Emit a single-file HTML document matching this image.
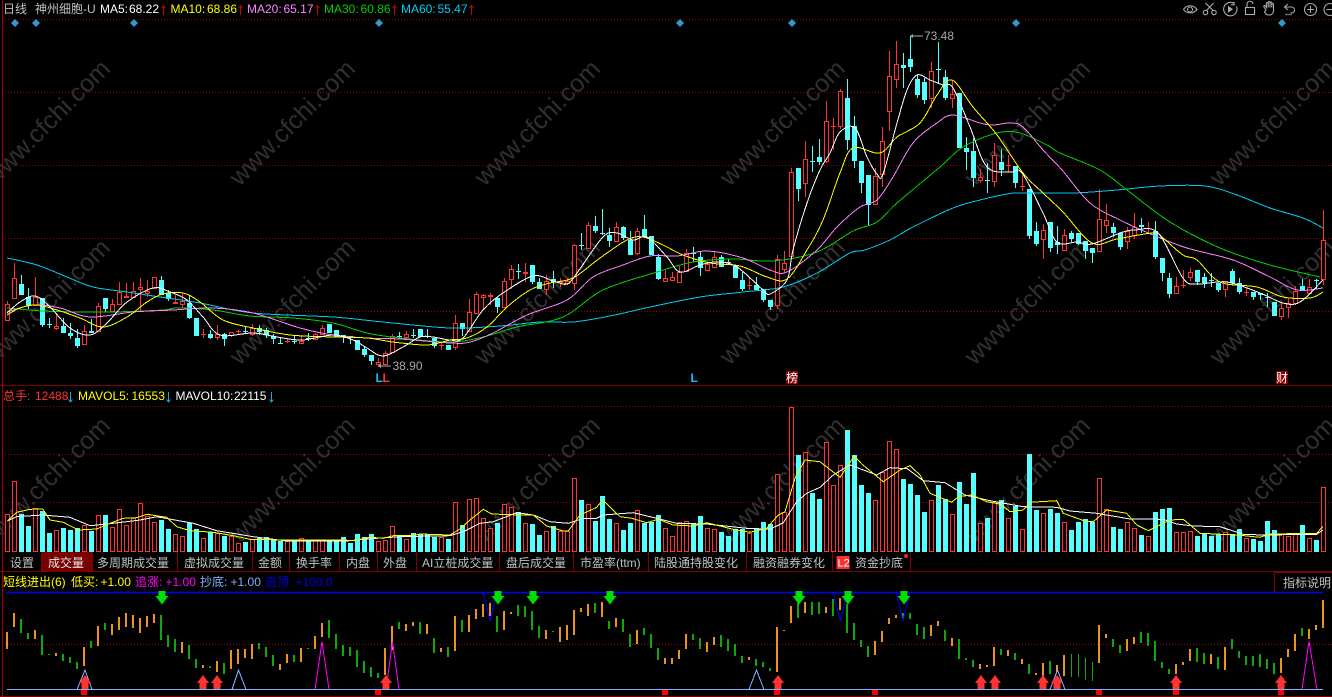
<!DOCTYPE html>
<html lang="zh">
<head>
<meta charset="utf-8">
<title>神州细胞-U 日线</title>
<style>
html,body{margin:0;padding:0;background:#000;width:1332px;height:697px;overflow:hidden}
svg{display:block;position:absolute;left:0;top:0}
text{font-family:"Liberation Sans","Noto Sans CJK SC",sans-serif;font-size:12px;white-space:pre}
.wm text{font-size:25px;fill:#303030}
.tab{fill:#c0c0c0}
</style>
</head>
<body>
<svg id="c" width="1332" height="697" viewBox="0 0 1332 697" xmlns="http://www.w3.org/2000/svg">
<g class="wm">
<text transform="translate(51,118) rotate(-45)" text-anchor="middle" x="-6" y="9">www.cfchi.com</text>
<text transform="translate(296,118) rotate(-45)" text-anchor="middle" x="-6" y="9">www.cfchi.com</text>
<text transform="translate(541,118) rotate(-45)" text-anchor="middle" x="-6" y="9">www.cfchi.com</text>
<text transform="translate(786,118) rotate(-45)" text-anchor="middle" x="-6" y="9">www.cfchi.com</text>
<text transform="translate(1031,118) rotate(-45)" text-anchor="middle" x="-6" y="9">www.cfchi.com</text>
<text transform="translate(1276,118) rotate(-45)" text-anchor="middle" x="-6" y="9">www.cfchi.com</text>
<text transform="translate(51,297) rotate(-45)" text-anchor="middle" x="-6" y="9">www.cfchi.com</text>
<text transform="translate(296,297) rotate(-45)" text-anchor="middle" x="-6" y="9">www.cfchi.com</text>
<text transform="translate(541,297) rotate(-45)" text-anchor="middle" x="-6" y="9">www.cfchi.com</text>
<text transform="translate(786,297) rotate(-45)" text-anchor="middle" x="-6" y="9">www.cfchi.com</text>
<text transform="translate(1031,297) rotate(-45)" text-anchor="middle" x="-6" y="9">www.cfchi.com</text>
<text transform="translate(1276,297) rotate(-45)" text-anchor="middle" x="-6" y="9">www.cfchi.com</text>
<text transform="translate(51,475) rotate(-45)" text-anchor="middle" x="-6" y="9">www.cfchi.com</text>
<text transform="translate(296,475) rotate(-45)" text-anchor="middle" x="-6" y="9">www.cfchi.com</text>
<text transform="translate(541,475) rotate(-45)" text-anchor="middle" x="-6" y="9">www.cfchi.com</text>
<text transform="translate(786,475) rotate(-45)" text-anchor="middle" x="-6" y="9">www.cfchi.com</text>
<text transform="translate(1031,475) rotate(-45)" text-anchor="middle" x="-6" y="9">www.cfchi.com</text>
<text transform="translate(1276,475) rotate(-45)" text-anchor="middle" x="-6" y="9">www.cfchi.com</text>
</g>

<!-- grid -->
<g stroke="#990000" stroke-width="1" stroke-dasharray="1 2" shape-rendering="crispEdges">
<path d="M5 19.5H1332M5 92.5H1332M5 165.5H1332M5 238.5H1332M5 311.5H1332M5 406.5H1332M5 454.5H1332M5 502.5H1332M5 644.5H1332"/>
</g>

<g id="candles"></g>
<g id="ma" fill="none" stroke-width="1" shape-rendering="crispEdges"></g>

<!-- diamonds -->
<g fill="#3399cc">
<path d="M15 19l4 4-4 4-4-4zM36 19l4 4-4 4-4-4zM134 19l4 4-4 4-4-4zM379 19l4 4-4 4-4-4zM680 19l4 4-4 4-4-4zM792 19l4 4-4 4-4-4zM1016 19l4 4-4 4-4-4zM1282 19l4 4-4 4-4-4z"/>
</g>

<!-- panel frame -->
<g stroke="#800000" stroke-width="1" shape-rendering="crispEdges" fill="none">
<path d="M0 385.5H1332M0 571.5H1332M0 696.5H1332"/>
<path d="M2.5 0V697" stroke="#a80000" stroke-width="1"/>
</g>

<!-- price labels -->
<g fill="#a8a8a8">
<text x="924" y="40">73.48</text>
<text x="392.5" y="370">38.90</text>
<path d="M923 35.5H913V34l-3 2 3 2v-1.500H923zM391 365.500H381V364l-3 2 3 2v-1.500H391z"/>
</g>
<g font-weight="bold">
<text x="375.500" y="382" fill="#00c8ff" font-weight="bold">L</text>
<text x="382.500" y="382" fill="#ff3333" font-weight="bold">L</text>
<text x="690.500" y="382" fill="#00c8ff" font-weight="bold">L</text>
</g>
<rect x="786" y="371" width="12" height="13" fill="#800000"/>
<text x="786" y="382" fill="#fff">榜</text>
<rect x="1276" y="371" width="12" height="13" fill="#800000"/>
<text x="1276" y="382" fill="#fff">财</text>

<!-- header -->
<text x="3" y="13" fill="#c0c0c0">日线</text>
<text x="35" y="13" fill="#c0c0c0">神州细胞-U</text>
<text x="100" y="13" fill="#fff">MA5:</text><text x="129" y="13" fill="#fff">68.22</text>
<text x="170.500" y="13" fill="#ffff00">MA10:</text><text x="207" y="13" fill="#ffff00">68.86</text>
<text x="247" y="13" fill="#ff80ff">MA20:</text><text x="283.500" y="13" fill="#ff80ff">65.17</text>
<text x="324" y="13" fill="#00d000">MA30:</text><text x="360.500" y="13" fill="#00d000">60.86</text>
<text x="401" y="13" fill="#00d0f0">MA60:</text><text x="437.500" y="13" fill="#00d0f0">55.47</text>
<path d="M163.500 15V5.500M161.500 8L163.500 5.500L165.500 8M240.500 15V5.500M238.500 8L240.500 5.500L242.500 8M317.500 15V5.500M315.500 8L317.500 5.500L319.500 8M394.500 15V5.500M392.500 8L394.500 5.500L396.500 8M471.500 15V5.500M469.500 8L471.500 5.500L473.500 8" fill="none" stroke="#d00000" stroke-width="1"/>

<!-- toolbar icons -->
<g fill="none" stroke="#aaaaaa" stroke-width="1.100">
<path d="M1183.500 9.500c3-5 10-5 13.500 0c-3.500 4.500-10.500 4.500-13.500 0z"/><circle cx="1190" cy="9.500" r="2.500"/>
<circle cx="1205.500" cy="12.500" r="2.200"/><circle cx="1214" cy="12.500" r="2.200"/><path d="M1206.500 10.500L1213.500 3M1213 10.500L1205.500 3"/>
<path d="M1234 3.500a6.700 6.700 0 1 0 2.500 3M1234 1.800v3h-3"/><path d="M1228 5.800l5 3.500-5 3.500z" fill="#aaaaaa" stroke="none"/>
<rect x="1245.500" y="7.500" width="9" height="7"/><path d="M1247 7V4.500a3 3 0 0 1 6-0.500"/>
<path d="M1266 10l-2-3c-.8-1.200.6-2 1.400-1l1.100 1.500V3.500c0-1.300 1.700-1.300 1.700 0V7.500V2.500c0-1.300 1.800-1.300 1.800 0V7.500V3c0-1.300 1.800-1.300 1.800 0V7.500V4.500c0-1.200 1.700-1.200 1.700 0V10.500c0 3-1.800 4.500-4.200 4.500h-1c-2 0-2.500-1.200-3.800-3z"/>
<path d="M1288 4l-3.500 3 3.500 3M1285 7h6.500a3 3 0 0 1 0 6h-1"/><path d="M1285 14.500h7" stroke="#666" stroke-width="1.500"/>
<circle cx="1310.500" cy="9.500" r="6"/><path d="M1310.500 6v7M1307 9.500h7"/>
<circle cx="1330" cy="9.500" r="6"/><path d="M1326.500 9.500h7"/>
</g>

<!-- volume labels -->
<text x="3" y="400" fill="#ff3333">总手:</text><text x="35" y="400" fill="#ff3333">12488</text>
<text x="78" y="400" fill="#ffff00">MAVOL5:</text><text x="131.500" y="400" fill="#ffff00">16553</text>
<text x="175.500" y="400" fill="#fff">MAVOL10:</text><text x="234" y="400" fill="#fff">22115</text>
<path d="M70.500 392V402M68.500 399.500L70.500 402L72.500 399.500M168.500 392V402M166.500 399.500L168.500 402L170.500 399.500M271.500 392V402M269.500 399.500L271.500 402L273.500 399.500" fill="none" stroke="#20a8c8" stroke-width="1"/>

<g id="vol"></g>
<g id="volma" fill="none" stroke-width="1" shape-rendering="crispEdges"></g>

<!-- tabs -->
<rect x="42" y="552" width="50" height="19" fill="#7a0000"/>
<path d="M41.500 552V571M92.500 552V571M177.500 552V571M252.500 552V571M289.500 552V571M339.500 552V571M377.500 552V571M416.500 552V571M499.500 552V571M573.500 552V571M648.500 552V571M746.500 552V571M832.500 552V571M910.500 552V571" stroke="#800000" shape-rendering="crispEdges"/>
<text class="tab" x="10" y="567">设置</text>
<text x="48" y="567" fill="#e8e8e8">成交量</text>
<text class="tab" x="97" y="567">多周期成交量</text>
<text class="tab" x="184" y="567">虚拟成交量</text>
<text class="tab" x="258" y="567">金额</text>
<text class="tab" x="296" y="567">换手率</text>
<text class="tab" x="346" y="567">内盘</text>
<text class="tab" x="383" y="567">外盘</text>
<text class="tab" x="422" y="567">AI立桩成交量</text>
<text class="tab" x="506" y="567">盘后成交量</text>
<text class="tab" x="580" y="567">市盈率(ttm)</text>
<text class="tab" x="654" y="567">陆股通持股变化</text>
<text class="tab" x="753" y="567">融资融券变化</text>
<rect x="836.500" y="556" width="13" height="13" fill="#ff3030"/>
<text x="837.500" y="566.500" fill="#fff" style="font-size:11px">L2</text>
<text class="tab" x="855" y="567">资金抄底</text>
<circle cx="906" cy="556" r="2" fill="#ff2020"/>

<!-- indicator labels -->
<text x="3" y="586" fill="#ffff00">短线进出(6)</text>
<text x="71" y="586" fill="#ffff00">低买:</text><text x="100.500" y="586" fill="#ffff00">+1.00</text>
<text x="135" y="586" fill="#ff00ff">追涨:</text><text x="165.500" y="586" fill="#ff00ff">+1.00</text>
<text x="200" y="586" fill="#80b0ff">抄底:</text><text x="230.500" y="586" fill="#80b0ff">+1.00</text>
<text x="265" y="586" fill="#0000e0">逃顶:</text><text x="295.500" y="586" fill="#0000e0">+100.0</text>
<path d="M1274.500 592V572.500H1332" fill="none" stroke="#800000" shape-rendering="crispEdges"/>
<text class="tab" x="1283" y="587">指标说明</text>

<g id="ind"></g>
<!-- blue top line & dips -->
<path d="M6 592.500H1323" fill="none" stroke="#0000ff" stroke-width="1.500"/>
<path d="M483 592L490 621L497 592M833 592L840.500 621L847 592M896 592L903 621L910 592" fill="none" stroke="#0000ff" stroke-width="1" shape-rendering="crispEdges"/>
<!-- bottom line + triangles -->
<path d="M7 689.500H1323" stroke="#80b0ff" stroke-width="1" shape-rendering="crispEdges"/>
<path d="M77 689.500L85 670L92 689.500M232 689.500L238.500 670L246 689.500M749 689.500L756.500 670L764 689.500M1050 689.500L1057.500 670L1065 689.500" fill="none" stroke="#80b0ff" stroke-width="1" shape-rendering="crispEdges"/>
<path d="M315 689.500L322 641.500L329 689.500M386 689.500L392.500 641.500L399 689.500M1302 689.500L1309 641.500L1317 689.500" fill="none" stroke="#ff00ff" stroke-width="1" shape-rendering="crispEdges"/>
<g id="arrows"></g>
</svg>
<script>
var NS='http://www.w3.org/2000/svg';
function mk(parent,tag,a){var e=document.createElementNS(NS,tag);for(var k in a)e.setAttribute(k,a[k]);document.getElementById(parent).appendChild(e);return e;}
var X=function(i){return 7+7*i;};
var C="301 304 320 320 1,263 278 298 298 1,275 284 295 295 0,288 297 306 309 0,277 297 305 305 1,298 298 325 327 0,318 324 324 328 0,313 326 328 330 1,318 326 333 333 0,323 333 336 339 0,329 338 346 348 0,325 331 344 344 1,319 331 333 333 0,303 306 331 331 1,298 298 309 312 0,299 304 311 311 1,282 292 304 304 1,283 296 297 298 1,282 291 297 297 1,278 287 289 312 1,280 291 293 297 1,277 277 288 288 1,276 280 295 295 0,290 293 299 301 0,295 302 303 303 1,293 301 304 308 1,296 303 318 319 0,318 318 336 336 0,329 334 334 338 1,330 334 338 339 0,325 334 337 340 1,333 334 339 346 0,332 332 335 337 1,330 331 331 335 1,327 331 331 334 0,324 328 334 336 1,325 328 332 335 0,328 330 335 338 0,334 336 339 344 0,338 343 343 344 0,338 341 341 343 1,336 341 341 344 0,335 341 343 344 1,333 338 338 341 0,333 334 339 340 1,325 328 334 335 1,324 324 333 333 0,330 330 337 337 0,335 335 337 343 0,336 336 338 344 0,340 340 350 350 0,347 349 355 357 0,355 355 361 365 0,358 362 364 367 1,351 353 364 364 1,334 336 352 352 1,332 336 336 338 0,331 334 337 337 1,329 335 335 338 0,329 329 337 337 0,329 336 336 338 0,338 338 346 348 0,342 345 345 350 1,345 345 350 350 0,315 323 347 350 1,323 323 329 336 0,299 312 331 331 1,292 294 313 314 1,294 295 297 310 1,293 295 296 305 1,297 298 307 313 0,278 281 307 308 1,265 269 279 289 1,264 271 271 279 0,263 272 273 282 1,265 265 282 284 0,278 282 289 289 0,275 281 289 295 1,271 279 282 288 0,278 281 282 287 1,278 281 283 285 1,244 245 283 290 1,233 245 245 250 0,222 225 248 248 1,216 226 231 233 0,209 233 233 235 0,228 235 241 247 0,222 227 241 241 1,226 227 238 240 0,231 240 255 255 0,228 231 253 255 1,215 229 237 238 0,236 236 255 255 0,254 257 279 280 0,270 278 281 281 1,272 277 280 281 1,266 272 282 283 1,249 253 271 272 1,247 253 253 262 0,252 257 268 276 0,261 264 270 270 1,252 257 267 268 1,255 257 267 267 0,259 262 262 265 0,266 266 278 278 0,272 280 289 291 0,277 285 285 290 1,277 285 290 291 0,289 289 300 302 0,300 300 307 310 0,255 259 305 309 1,251 263 269 272 1,168 172 256 256 1,168 168 189 201 0,141 159 183 197 1,146 161 161 172 0,139 157 162 165 0,101 121 161 163 1,118 126 126 150 1,89 91 126 129 1,79 98 140 150 0,116 126 161 168 0,161 161 183 193 0,175 175 205 226 0,168 176 204 204 1,127 141 174 187 1,51 76 111 131 1,41 64 79 88 1,53 65 68 88 0,36 59 67 72 0,75 79 95 98 0,78 82 100 104 0,62 71 98 108 1,42 69 69 83 0,70 77 98 100 0,80 94 98 108 1,93 93 148 148 0,137 148 152 170 0,138 151 178 187 0,169 177 180 183 1,163 180 180 193 0,143 155 181 187 1,149 162 170 176 0,155 165 165 172 1,166 166 183 188 0,175 186 186 191 1,189 189 236 239 0,222 231 244 246 0,224 230 239 259 1,222 222 248 252 0,226 242 245 254 0,229 235 250 250 1,231 233 239 242 0,233 233 244 245 0,241 241 251 259 0,248 248 253 263 0,189 219 251 251 1,204 220 225 233 1,223 227 233 237 0,233 233 247 250 0,227 231 241 249 1,213 227 235 239 1,218 225 227 233 0,222 233 233 233 1,221 231 257 259 0,258 258 273 281 0,273 278 294 298 0,277 286 293 293 1,270 285 285 288 1,268 272 277 281 1,270 270 282 285 0,273 277 283 288 0,273 280 280 287 0,283 283 290 292 0,281 281 289 297 1,269 271 283 285 0,278 283 292 294 0,288 292 292 296 1,292 292 297 300 0,293 293 295 300 0,293 297 297 307 0,302 302 316 316 0,302 308 316 320 1,299 303 307 318 1,286 291 303 305 1,279 286 291 291 0,279 287 293 293 1,279 280 280 289 0,210 240 279 285 1".split(',');
var RED='#ff3333',CY='#54ffff';
C.forEach(function(s,i){
  var p=s.split(' ').map(Number),x=X(i),col=p[4]?RED:CY;
  mk('candles','rect',{x:x,y:p[0],width:1,height:p[3]-p[0],fill:col,'shape-rendering':'crispEdges'});
  if(p[1]==p[2]){mk('candles','rect',{x:x-2,y:p[1],width:5,height:1,fill:col,'shape-rendering':'crispEdges'});}
  else if(p[4]){mk('candles','rect',{x:x-1.5,y:p[1]+.5,width:4,height:p[2]-p[1],fill:'#000',stroke:col,'stroke-width':1,'shape-rendering':'crispEdges'});}
  else{mk('candles','rect',{x:x-2,y:p[1],width:5,height:p[2]-p[1],fill:col,'shape-rendering':'crispEdges'});}
});
var MA=[
["#00ccee","7,258 37,265 67,277 93,287 127,292 160,297 200,303 253,313 333,317 383,322 450,328 500,326 540,322 573,322 610,316 650,307 700,297 743,292 783,287 817,273 850,253 865,250 890,240 913,227 953,208 980,200 1007,194 1020,193 1073,193 1117,190 1160,186 1205,186 1237,195 1270,208 1303,218 1323,228"],
["#00d000","7,308 43,311 80,312 113,312 163,310 177,308 213,310 250,316 293,318 333,323 367,333 400,338 450,342 483,337 517,327 563,317 603,290 657,272 693,262 733,259 773,261 817,252 853,231 877,222 897,203 940,167 963,147 997,133 1020,133 1047,145 1060,153 1100,170 1127,190 1170,222 1220,248 1270,265 1320,277"],
["#ff80ff","7,312 33,305 60,308 90,317 133,312 173,310 213,308 253,313 300,328 333,335 367,338 400,339 450,343 470,342 493,333 527,315 567,300 593,277 623,265 650,256 677,256 707,251 743,258 770,270 787,272 817,250 837,227 860,207 877,200 893,177 913,143 937,123 953,115 980,123 993,125 1010,123 1023,127 1043,150 1062,170 1090,203 1120,220 1153,235 1187,248 1233,260 1270,277 1297,290 1323,288"],
["#ffff00","7,315 20,308 37,305 57,310 80,318 103,327 127,317 147,302 163,294 183,293 200,302 223,320 253,328 290,335 333,337 367,338 393,342 427,345 450,340 467,338 487,327 507,307 530,290 550,283 573,278 600,258 627,240 643,237 663,245 683,255 710,263 740,266 767,277 787,279 807,250 823,220 840,173 853,148 880,153 897,137 920,123 937,95 952,80 973,107 997,135 1023,173 1043,193 1063,212 1092,243 1117,239 1153,233 1163,238 1183,255 1197,260 1220,282 1257,287 1283,297 1310,298 1323,292"],
["#ffffff","7,313 20,302 35,296 50,307 70,328 90,335 107,323 127,302 153,288 170,292 187,300 203,317 220,335 253,333 277,337 302,340 333,335 353,340 367,348 383,356 403,347 420,337 433,337 450,340 463,338 483,310 503,293 533,276 553,281 567,284 577,273 603,237 617,233 633,240 647,237 667,257 680,272 700,265 717,262 737,267 763,290 770,294 787,280 793,250 807,203 820,170 830,153 840,132 855,128 867,157 877,174 883,174 897,123 907,90 917,75 930,80 943,85 953,88 970,127 987,167 1010,172 1022,173 1043,213 1057,242 1077,242 1092,244 1120,233 1135,230 1158,233 1183,278 1197,284 1227,282 1260,293 1283,303 1300,302 1323,280"]
];
function smooth(str){
  var P=str.split(' ').map(function(s){return s.split(',').map(Number);}),d='M'+P[0][0]+' '+P[0][1];
  for(var i=0;i<P.length-1;i++){
    var a=P[Math.max(0,i-1)],b=P[i],c=P[i+1],e=P[Math.min(P.length-1,i+2)];
    d+='C'+(b[0]+(c[0]-a[0])/6).toFixed(1)+' '+(b[1]+(c[1]-a[1])/6).toFixed(1)+' '+(c[0]-(e[0]-b[0])/6).toFixed(1)+' '+(c[1]-(e[1]-b[1])/6).toFixed(1)+' '+c[0]+' '+c[1];
  }
  return d;
}
MA.forEach(function(m){mk('ma','path',{d:smooth(m[1]),stroke:m[0]});});

var V="514.3 1,480.7 1,514.3 0,526 0,508.3 1,511 0,533 0,530.3 1,528 0,530 0,528 0,525 1,531 0,515.3 1,515 0,526.7 1,509.3 1,525 1,518.3 1,503.3 1,515.7 1,522.3 1,520 0,529 0,534.3 1,536.3 1,523.3 0,529 0,538.3 1,532.3 0,532.7 1,536 0,536 1,543.3 1,542 0,539 1,538.3 0,537.3 0,539 0,540.7 0,541 1,540.3 0,538.3 1,540.7 0,540 1,540 1,540.3 0,540.3 0,537 0,543 0,534 0,537 0,534 0,541 1,540 1,526.3 1,535 0,539 1,533 0,534 0,534.3 0,537 0,537.3 1,539 0,502.3 1,525 0,499.3 1,498.3 1,518.3 1,528.3 1,523.3 0,504.3 1,507.3 1,512.3 0,523.3 1,524 0,535 0,531.3 1,526 0,531 1,531 1,478.3 1,500 0,504.3 1,521 0,496 0,519 0,523.3 1,530 0,523.3 0,510.3 1,522.7 0,522.3 0,515 0,528.3 1,536 1,522.3 1,521.3 1,524 0,516 0,528.3 1,529.3 1,532 0,536 0,529.3 0,529 0,533 1,528.3 0,522 0,524 0,474.3 1,511.7 1,406.7 1,455 0,452.3 1,493.3 0,499 0,442.3 1,485.3 1,465.3 1,430 0,455 0,485 0,493.3 0,500.3 1,472.3 1,441.3 1,449.3 1,479 0,484 0,495 0,512 0,500.3 1,485 0,499 0,514.3 1,482 0,504 0,473 0,523.3 1,518 0,502.3 1,500.3 0,518.3 1,506 0,529.3 1,454 0,510 0,513.3 1,509 0,513 0,522.3 1,530 0,522 0,519 0,522 0,478.3 1,509.3 1,527 0,529 0,522.3 1,528.3 1,535 0,536.3 1,512 0,509 0,508 0,532.3 1,532.3 1,531.3 1,536 0,533.3 0,536 0,534.3 0,532.3 1,534.3 0,529 0,538.3 1,539 0,541 0,521 0,530 0,534.3 1,536.3 1,533.3 1,525 0,538.3 1,540 0,487.3 1".split(',');
V.forEach(function(s,i){
  var p=s.split(' '),y=Math.round(+p[0]),x=X(i);
  if(+p[1]) mk('vol','rect',{x:x-1.5,y:y+.5,width:4,height:551-y,fill:'#000',stroke:RED,'stroke-width':1,'shape-rendering':'crispEdges'});
  else mk('vol','rect',{x:x-2,y:y,width:5,height:552-y,fill:CY,'shape-rendering':'crispEdges'});
});
function cv(list,ox,oy){return list.map(function(p){return (ox+p[0]/3).toFixed(1)+','+(oy+p[1]/3).toFixed(1);}).join(' ');}
var yl=cv([[22,408],[50,382],[90,373],[128,372],[150,405],[190,412],[235,435],[290,432],[330,415],[370,400],[410,398],[440,388],[500,397],[530,425],[570,437],[640,442],[700,452],[750,463],[850,465],[940,465],[1030,465],[1060,467],[1110,457],[1150,460],[1180,452],[1240,452],[1260,447],[1350,450]],0,385)+' '+
cv([[30,387],[60,360],[100,328],[125,342],[210,345],[250,345],[290,378],[340,393],[355,393],[390,345],[440,322],[458,300],[510,350],[545,355],[590,368],[625,358],[670,375],[730,378],[770,368],[850,388],[900,397],[950,385],[985,345],[1005,335],[1035,235],[1065,180],[1110,185],[1170,232],[1213,168],[1235,192],[1300,245],[1350,210]],450,400)+' '+
cv([[30,197],[60,225],[90,280],[155,307],[175,290],[215,285],[260,305],[300,312],[330,335],[370,330],[390,307],[470,302],[490,340],[560,365],[580,365],[620,330],[680,340],[710,375],[745,392],[810,360],[850,358],[900,400],[1010,405],[1080,412],[1110,402],[1250,400],[1268,380]],900,400);
var wh=cv([[22,408],[50,395],[128,390],[210,397],[270,422],[340,415],[420,405],[470,395],[580,415],[650,437],[760,455],[860,468],[1040,468],[1100,462],[1200,455],[1350,452]],0,385)+' '+
cv([[40,395],[90,370],[130,365],[200,338],[250,345],[300,365],[355,370],[400,355],[440,355],[460,345],[550,338],[620,355],[680,370],[770,372],[890,385],[960,388],[1000,368],[1040,305],[1070,280],[1110,262],[1150,225],[1200,195],[1280,225],[1320,203],[1350,205]],450,400)+' '+
cv([[20,205],[70,242],[135,248],[195,285],[270,302],[370,320],[470,322],[510,333],[590,340],[690,357],[790,358],[830,372],[880,378],[960,380],[1030,403],[1090,405],[1250,403],[1268,390]],900,400);
mk('volma','polyline',{points:wh,stroke:'#ffffff'});
mk('volma','polyline',{points:yl,stroke:'#ffff00'});

var I="632 649 1,613 627 1,619 633 0,633 639 0,630 639 1,635 655 0,654 655 0,653 656 1,654 661 0,657 663 0,662 669 0,647 666 1,641 648 0,626 646 1,623 630 0,624 635 1,617 630 1,613 627 1,615 628 1,618 633 1,616 627 1,614 623 1,615 640 0,635 647 0,639 652 0,642 653 1,645 659 0,659 668 0,665 668 1,666 668 0,661 672 1,663 674 0,650 669 1,649 664 1,649 658 1,644 659 1,643 649 0,647 657 0,655 666 0,664 670 1,654 663 1,655 662 0,648 662 1,648 649 0,636 649 1,623 637 1,620 638 0,634 649 0,645 656 0,647 656 0,650 667 0,661 673 0,667 677 0,673 678 0,648 675 1,626 650 1,622 629 0,624 631 1,622 626 1,622 634 0,624 634 1,638 653 0,648 652 1,647 657 0,616 651 1,620 632 0,615 632 1,609 619 1,604 617 1,603 616 1,616 632 0,611 630 1,612 614 1,605 616 0,606 617 0,611 630 0,626 638 0,630 639 1,631 632 0,627 642 1,625 640 1,610 635 1,608 612 1,604 616 1,603 613 0,602 617 1,621 629 0,618 627 1,619 632 0,634 647 0,630 644 1,628 635 0,634 648 0,648 660 0,658 664 1,658 664 1,650 659 1,634 649 1,634 640 0,638 649 0,642 652 1,637 645 1,635 647 0,639 651 0,644 656 0,656 663 0,657 660 1,659 666 0,662 667 0,668 671 0,627 672 1,630 631 1,606 623 1,603 618 0,602 613 1,602 615 0,602 614 0,607 613 1,599 616 0,598 610 1,604 633 0,623 640 0,640 647 0,646 657 0,641 655 1,631 642 1,618 624 1,615 618 1,613 620 0,613 619 0,624 635 0,627 639 0,625 636 1,621 626 1,630 641 0,638 646 1,639 659 0,658 660 0,660 667 0,664 669 1,665 667 1,647 666 1,649 655 0,650 656 1,653 660 0,659 664 1,664 674 0,673 675 1,663 677 1,661 674 0,665 672 1,655 676 1,654 677 0,654 677 0,658 680 0,662 681 0,625 663 1,634 638 1,639 647 0,645 653 0,639 651 1,637 644 1,632 643 0,633 646 0,641 661 0,662 668 0,669 674 0,664 674 1,662 665 1,649 661 1,648 662 0,653 664 0,654 664 1,657 669 0,647 670 1,639 649 0,651 658 0,656 665 0,656 666 0,654 667 0,659 669 0,663 674 0,658 673 1,649 657 1,634 651 1,628 636 0,629 639 1,625 630 1,600 628 1".split(',');
var thin={152:1,153:1,154:1,155:1};
I.forEach(function(s,i){
  var p=s.split(' ').map(Number);
  mk('ind','rect',{x:6+7*i+(thin[i]?1:0),y:p[0],width:thin[i]?1:2,height:Math.max(1,p[1]-p[0]),fill:p[2]?'#e8941e':'#0ca80c','shape-rendering':'crispEdges'});
});
// red up arrows
[85,203,217,386,778,981,995,1043,1057,1176,1281].forEach(function(x){
  mk('arrows','path',{d:'M'+x+' 675L'+(x+6)+' 683H'+(x+3.5)+'V689H'+(x-3.5)+'V683H'+(x-6)+'Z',fill:'#ff3333'});
});
// green down arrows
[162,498,533,610,799,848,904].forEach(function(x){
  mk('arrows','path',{d:'M'+(x-3.5)+' 591H'+(x+3.5)+'V596H'+(x+6.5)+'L'+x+' 604.500L'+(x-6.500)+' 596H'+(x-3.5)+'Z',fill:'#00e000'});
});
// red squares
[81,375,662,774,872,1096,1173,1278].forEach(function(x){
  mk('arrows','rect',{x:x,y:690,width:6,height:5,fill:'#ff0000'});
});
</script>
</body>
</html>
